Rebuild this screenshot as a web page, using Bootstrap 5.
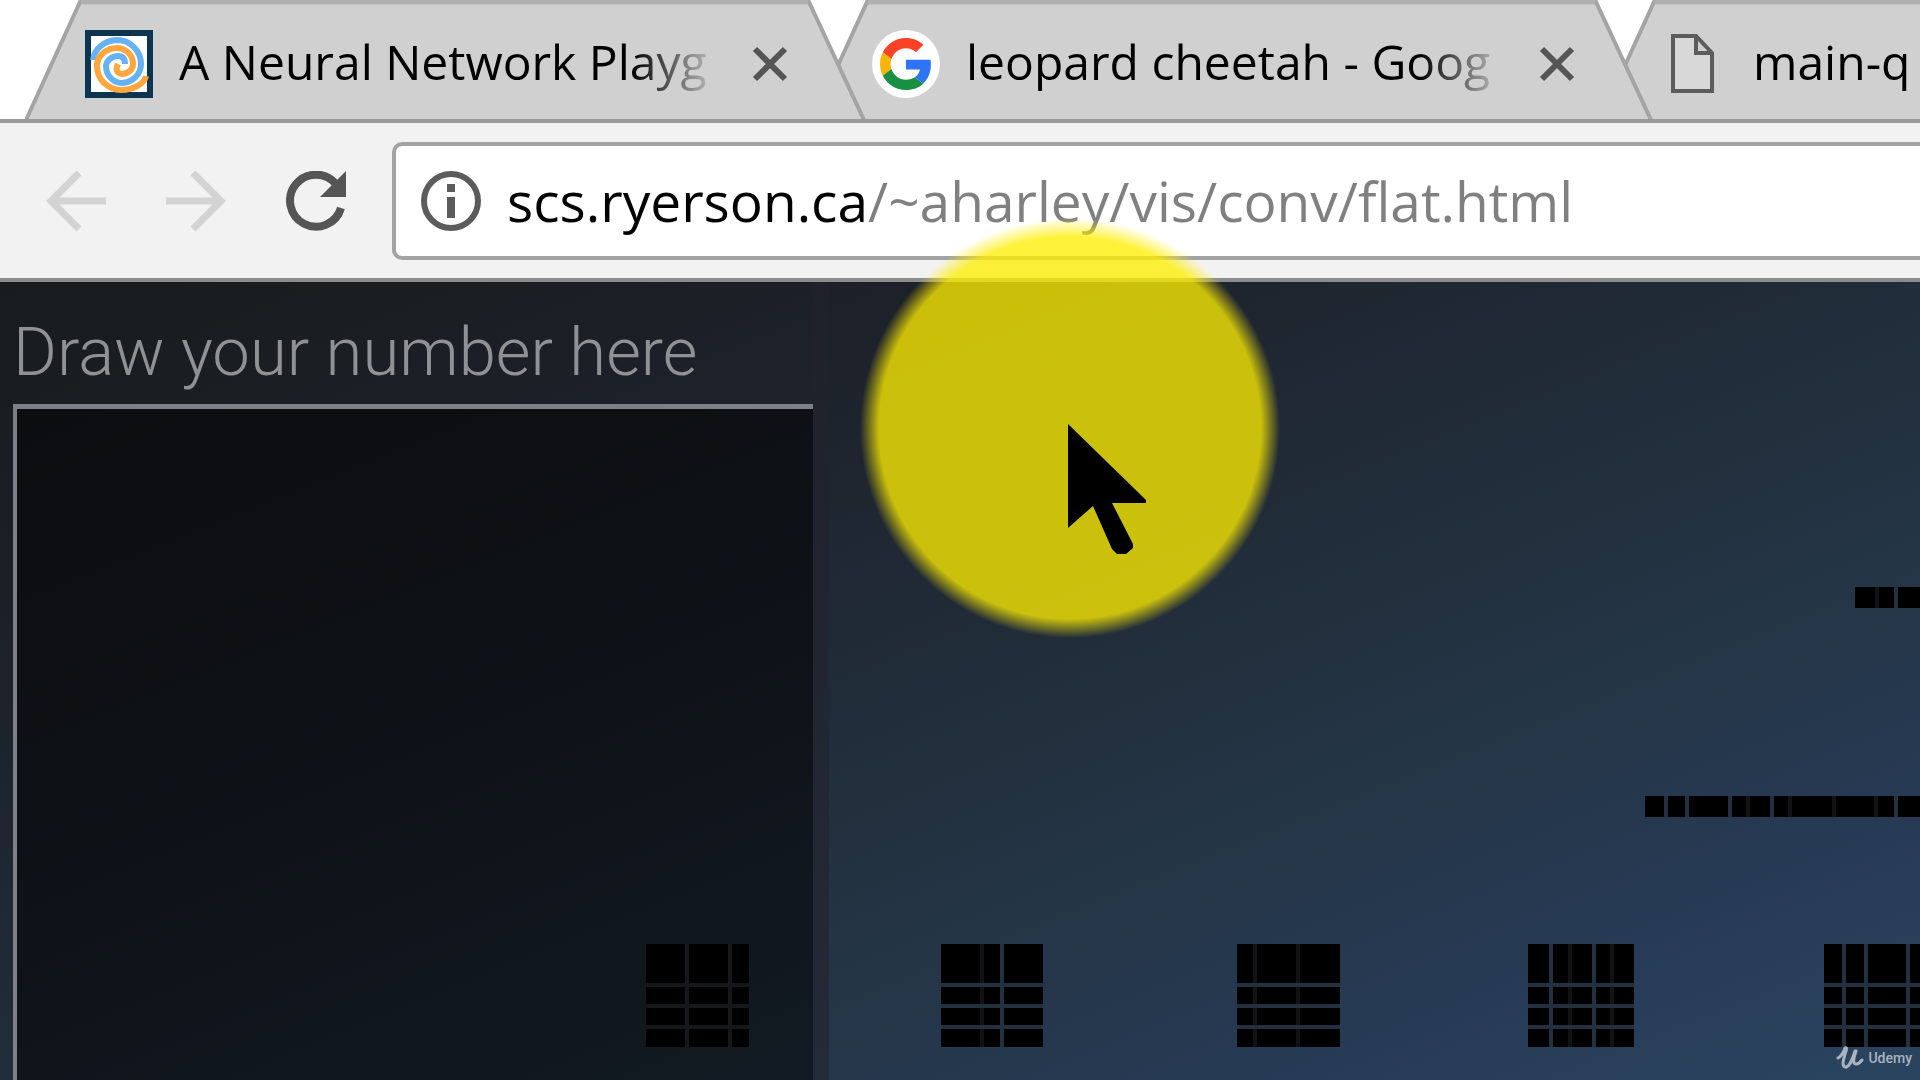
<!DOCTYPE html>
<html lang="en">
<head>
<meta charset="utf-8">
<meta name="viewport" content="width=device-width, initial-scale=1">
<title>Convolutional network visualization</title>
<link href="https://cdn.jsdelivr.net/npm/bootstrap@5.3.0/dist/css/bootstrap.min.css" rel="stylesheet">
<style>
  body { font-family: "Open Sans", "Noto Sans", sans-serif; }

  /* tab strip */
  .tab-strip { height: 119px; padding-left: 25px; background: #fff; }
  .browser-tab { width: 842px; height: 119px; margin-right: -55px; padding-left: 60px; padding-right: 79px; padding-top: 8px; isolation: isolate; }
  .browser-tab:nth-child(1) { z-index: 3; }
  .browser-tab:nth-child(2) { z-index: 2; }
  .browser-tab:nth-child(3) { z-index: 1; }
  .tab-shape { z-index: -1; }
  .tab-title { color: #000; font-size: 48px; line-height: 72px; margin-left: 26px; padding-bottom: 4px;
    -webkit-mask-image: linear-gradient(to left, transparent 0, #000 88px); mask-image: linear-gradient(to left, transparent 0, #000 88px); }
  .tab-close { width: 36px; height: 36px; margin-left: 32px; }

  /* toolbar */
  .toolbar { height: 163px; padding: 18px 0 18px 46px; background: #f2f2f2; border-top: 4px solid #9a9a9a; border-bottom: 4px solid #8b8c8e; }
  .nav-btn { width: 60px; height: 60px; }
  .nav-set { gap: 60px; }
  .omnibox { height: 118px; margin-left: 46px; padding-left: 25px; background: #fff; border: 4px solid #a3a3a3; border-right: 0; border-radius: 10px 0 0 10px; }
  .url-field { font-size: 55px; line-height: 76px; margin-left: 26px; color: transparent; outline: 0;
    background: linear-gradient(to right, #000 361px, #808080 361px); -webkit-background-clip: text; background-clip: text; }

  /* page */
  .stage { background: linear-gradient(158deg, #181c1d 0%, #1c1f26 20%, #202a36 44%, #243545 66%, #273a54 82%, #2a4460 100%); }
  .draw-side { width: 829px; padding-left: 13px; background: linear-gradient(to right, transparent 813px, rgba(34, 34, 44, .6) 813px); }
  .draw-label { font-family: Roboto, sans-serif; font-weight: 300; font-size: 67px; line-height: 88px; padding-top: 26px; margin-bottom: 8px; color: #8f9194; }
  .draw-pad { width: 800px; background: rgba(0, 0, 0, .53); border-top: 5px solid #7d8087; border-left: 4px solid #7d8087; }
  .layer-map { z-index: 1; }
  .pointer-halo { left: 859px; top: 217px; z-index: 5; width: 422px; height: 422px; pointer-events: none;
    background: radial-gradient(circle, rgba(255, 238, 0, .77) 191px, rgba(255, 238, 0, 0) 210px); }
  .pointer-arrow { left: 1068px; top: 424px; z-index: 6; pointer-events: none; }
  .brand { right: 8px; bottom: 10px; z-index: 4; gap: 4px; color: #a9b3bf; font: 500 14px/24px Roboto, sans-serif; }
</style>
</head>
<body class="vh-100 overflow-hidden d-flex flex-column position-relative">

<nav class="tab-strip d-flex flex-shrink-0 overflow-hidden" aria-label="Tabs">
  <div class="browser-tab position-relative d-flex align-items-center flex-shrink-0">
    <svg class="tab-shape position-absolute top-0 start-0" width="842" height="119" aria-hidden="true"><path d="M1 120 55 2H784L839 120" fill="#d0d0d0" stroke="#a4a4a4" stroke-width="4"/><path d="M56 2H783" stroke="#b0b0b0" stroke-width="5"/></svg>
    <svg class="flex-shrink-0" width="68" height="68" viewBox="0 0 68 68" aria-hidden="true">
      <rect x="3" y="3" width="62" height="62" fill="#fff" stroke="#0b3550" stroke-width="6"/>
      <g fill="none" stroke-width="6">
        <path stroke="#66b2f2" d="M8 30A25 22 0 0 1 32 10A24 24 0 0 1 56 34A20 19 0 0 1 37 53A16 17 0 0 1 21 36A12 11 0 0 1 33 26Q40 26 40 34"/>
        <path stroke="#ffa63d" d="M61 46A26 16 0 0 1 36 60A24 24 0 0 1 12 36A20 18 0 0 1 32 18A16 16 0 0 1 48 34A11 10 0 0 1 37 44Q29 43 33 34"/>
      </g>
    </svg>
    <a class="tab-title flex-grow-1 overflow-hidden text-nowrap text-decoration-none" href="#playground">A Neural Network Playg</a>
    <button class="tab-close btn p-0 border-0 d-flex flex-shrink-0" type="button" aria-label="Close tab"><svg width="36" height="36" viewBox="0 0 36 36"><path d="M3 3 33 33M33 3 3 33" stroke="#555" stroke-width="6"/></svg></button>
  </div>
  <div class="browser-tab position-relative d-flex align-items-center flex-shrink-0">
    <svg class="tab-shape position-absolute top-0 start-0" width="842" height="119" aria-hidden="true"><path d="M1 120 55 2H784L839 120" fill="#d0d0d0" stroke="#a4a4a4" stroke-width="4"/><path d="M56 2H783" stroke="#b0b0b0" stroke-width="5"/></svg>
    <svg class="flex-shrink-0" width="68" height="68" viewBox="0 0 68 68" aria-hidden="true">
      <circle cx="34" cy="34" r="34" fill="#fff"/>
      <svg x="8" y="8" width="52" height="52" viewBox="0 0 48 48">
        <path fill="#fb4226" d="M24 9.500c3.540 0 6.710 1.220 9.210 3.600l6.850-6.850C35.900 2.380 30.470 0 24 0 14.620 0 6.510 5.380 2.560 13.220l7.980 6.190C12.430 13.720 17.740 9.500 24 9.500z"/>
        <path fill="#2f73f6" d="M46.980 24.550c0-1.570-.15-3.090-.38-4.550H24v9.020h12.940c-.58 2.960-2.260 5.480-4.780 7.180l7.730 6c4.510-4.180 7.090-10.360 7.090-17.650z"/>
        <path fill="#fbb40a" d="M10.530 28.590c-.48-1.450-.76-2.990-.76-4.590s.27-3.140.76-4.590l-7.980-6.190C.92 16.460 0 20.120 0 24c0 3.880.92 7.540 2.560 10.780l7.970-6.190z"/>
        <path fill="#189043" d="M24 48c6.480 0 11.930-2.130 15.890-5.810l-7.730-6c-2.150 1.450-4.920 2.300-8.160 2.300-6.260 0-11.570-4.220-13.470-9.910l-7.980 6.190C6.510 42.620 14.620 48 24 48z"/>
      </svg>
    </svg>
    <a class="tab-title flex-grow-1 overflow-hidden text-nowrap text-decoration-none" href="#search">leopard cheetah - Goog</a>
    <button class="tab-close btn p-0 border-0 d-flex flex-shrink-0" type="button" aria-label="Close tab"><svg width="36" height="36" viewBox="0 0 36 36"><path d="M3 3 33 33M33 3 3 33" stroke="#555" stroke-width="6"/></svg></button>
  </div>
  <div class="browser-tab position-relative d-flex align-items-center flex-shrink-0">
    <svg class="tab-shape position-absolute top-0 start-0" width="842" height="119" aria-hidden="true"><path d="M1 120 55 2H784L839 120" fill="#d0d0d0" stroke="#a4a4a4" stroke-width="4"/><path d="M56 2H783" stroke="#b0b0b0" stroke-width="5"/></svg>
    <svg class="flex-shrink-0" width="68" height="68" viewBox="0 0 68 68" aria-hidden="true"><path d="M14 6H37L53 23V61H14ZM37 6V23H53" fill="#d8d8d8" stroke="#5c5c5c" stroke-width="4"/></svg>
    <a class="tab-title flex-grow-1 overflow-hidden text-nowrap text-decoration-none" href="#image">main-q</a>
  </div>
</nav>

<header class="toolbar d-flex align-items-center flex-shrink-0">
  <div class="nav-set d-flex flex-shrink-0">
    <button class="nav-btn btn p-0 border-0 d-flex" type="button" aria-label="Back"><svg width="60" height="60" viewBox="0 0 60 60"><path d="M60 30H6M33 2 5 30 33 58" fill="none" stroke="#d3d3d3" stroke-width="7"/></svg></button>
    <button class="nav-btn btn p-0 border-0 d-flex" type="button" aria-label="Forward"><svg width="60" height="60" viewBox="0 0 60 60"><path d="M0 30H54M27 2 55 30 27 58" fill="none" stroke="#d3d3d3" stroke-width="7"/></svg></button>
    <button class="nav-btn btn p-0 border-0 d-flex" type="button" aria-label="Reload"><svg width="60" height="60" viewBox="0 0 60 60"><path d="M50 13A26 26 0 1 0 55 37" fill="none" stroke="#555" stroke-width="8"/><path d="M60 0V26H34Z" fill="#555"/></svg></button>
  </div>
  <div class="omnibox d-flex align-items-center flex-grow-1">
    <label class="d-flex flex-shrink-0" for="url" aria-label="Address"><svg width="60" height="60" viewBox="0 0 60 60" aria-hidden="true"><circle cx="30" cy="30" r="27" fill="none" stroke="#5c5c5c" stroke-width="6"/><path d="M30 13V21M30 26V47" stroke="#5c5c5c" stroke-width="8"/></svg></label>
    <input class="url-field flex-grow-1 border-0 p-0" id="url" type="text" value="scs.ryerson.ca/~aharley/vis/conv/flat.html" spellcheck="false">
  </div>
</header>

<main class="stage position-relative flex-grow-1 overflow-hidden d-flex">
  <section class="draw-side d-flex flex-column">
    <h1 class="draw-label text-nowrap">Draw your number here</h1>
    <div class="draw-pad flex-grow-1"></div>
  </section>

  <!-- neurons of the layers; g.dim holds the fainter cell seams -->
  <svg class="layer-map position-absolute top-0 start-0" width="1920" height="798" viewBox="0 282 1920 798" role="img" aria-label="Network layers">
    <path d="M1855 587h65v21h-65zM1645 796h275v21h-275z"/>
    <path d="M646 944h103v103h-103zM941 944h102v103h-102zM1237 944h103v103h-103zM1528 944h106v103h-106zM1824 944h96v103h-96z"/>
    <g class="dim" stroke="#101216" stroke-width="4">
      <path d="M1877 587v21M1748 796v21M1790 796v21M1834 796v21M1876 796v21"/>
      <path d="M982 944v103M1255 944v103M1298 944v103M1570 944v103M1612 944v103"/>
    </g>
    <path stroke="#15171a" stroke-width="4" d="M687 944v103M730 944v103M646 985h103M646 1006h103M646 1027h103"/>
    <g stroke="#22303f" stroke-width="4">
      <path d="M1896 587v21M1666 796v21M1687 796v21M1730 796v21M1772 796v21M1896 796v21"/>
      <path d="M1002 944v103M1551 944v103M1594 944v103M1844 944v103M1866 944v103M1908 944v103"/>
      <path d="M941 985h102M941 1006h102M941 1027h102M1237 985h103M1237 1006h103M1237 1027h103M1528 985h106M1528 1006h106M1528 1027h106M1824 985h96M1824 1006h96M1824 1027h96"/>
    </g>
  </svg>

  <div class="brand position-absolute d-flex align-items-center">
    <svg width="28" height="24" viewBox="0 0 28 24" aria-hidden="true"><path d="M2 12C6 10 8 5 9 2C10 1 11 2 10 5C8 12 5 20 9 21C13 22 17 12 19 5M20 5C18 11 16 18 20 18Q23 18 26 14" fill="none" stroke="#a9b3bf" stroke-width="3" stroke-linecap="round"/></svg>
    <span>Udemy</span>
  </div>
</main>

<div class="pointer-halo position-absolute"></div>
<svg class="pointer-arrow position-absolute" width="80" height="132" viewBox="0 0 80 132" aria-hidden="true"><path d="M0 0 78 76V79H44L65 120V124L58 130H49L44 125 25 82 0 104Z"/></svg>

<script src="https://cdn.jsdelivr.net/npm/bootstrap@5.3.0/dist/js/bootstrap.bundle.min.js"></script>
</body>
</html>
